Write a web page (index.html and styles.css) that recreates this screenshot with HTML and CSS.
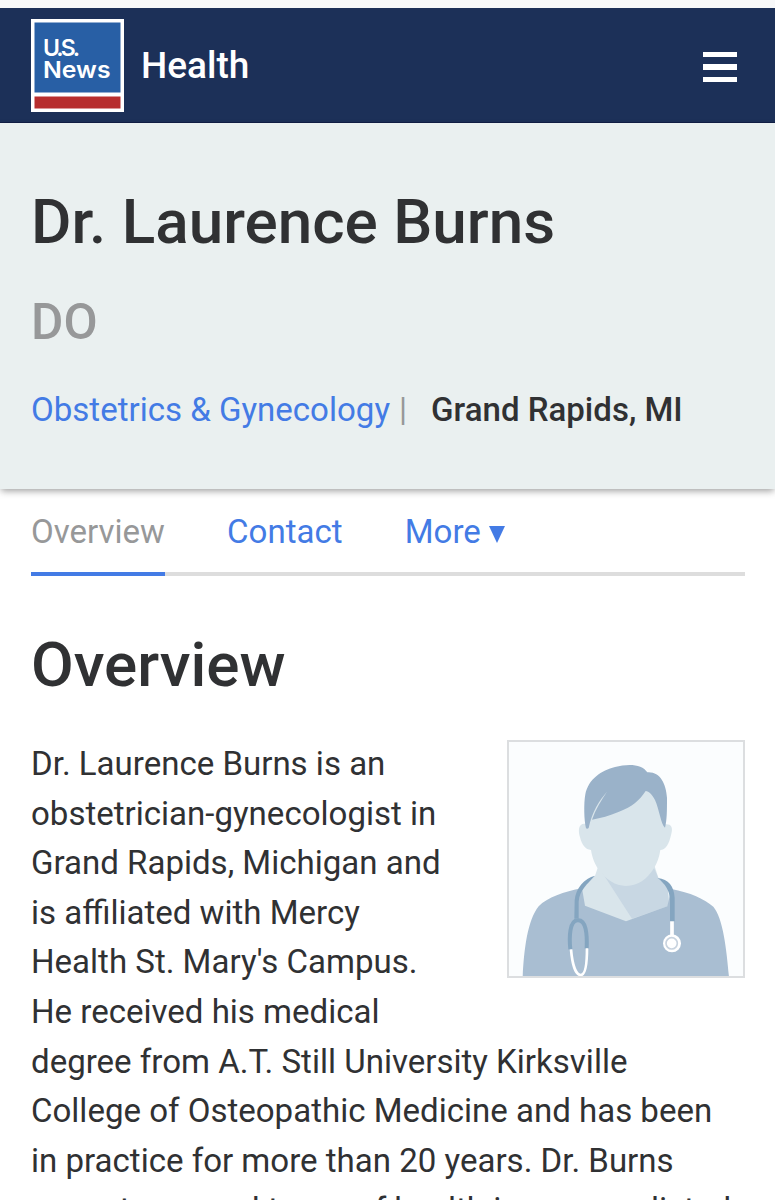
FILE: index.html
```
<!DOCTYPE html>
<html lang="en">
<head>
  <meta charset="UTF-8">
  <meta name="viewport" content="width=device-width, initial-scale=1.0">
  <title>Dr. Laurence Burns - U.S. News Health</title>
  <link rel="stylesheet" href="styles.css">
</head>
<body>
  <header class="navbar">
    <a class="brand" href="#">
      <svg class="logo" viewBox="0 0 93 93" aria-label="U.S. News">
        <rect width="93" height="93" fill="#fff"/>
        <rect x="3.5" y="3.5" width="86" height="70" fill="#285fa5"/>
        <rect x="3.5" y="77.5" width="86" height="12" fill="#b72d2e"/>
        <text x="12" y="36.8" textLength="37">U.S.</text>
        <text x="12" y="58.5" textLength="67.5" lengthAdjust="spacingAndGlyphs">News</text>
      </svg>
      <span>Health</span>
    </a>
    <button class="menu" aria-label="Menu"><i></i><i></i><i></i></button>
  </header>

  <section class="hero">
    <h1>Dr. Laurence Burns</h1>
    <p class="degree">DO</p>
    <p class="specialty"><a href="#">Obstetrics &amp; Gynecology</a><span class="divider">|</span><strong>Grand Rapids, MI</strong></p>
  </section>

  <main>
    <nav class="tabs">
      <a class="active" href="#">Overview</a>
      <a href="#">Contact</a>
      <a href="#">More <svg class="caret" viewBox="0 0 16 17"><path d="M0 0h16L8 17z"/></svg></a>
    </nav>

    <h2>Overview</h2>
    <div class="bio">
      <svg class="photo" viewBox="27 35 702 702">
        <!-- neck -->
        <path fill="#d9e5eb" d="M294 410L285 436L244 478L250 535L378 580L510 530L502 465L476 445L463 405z"/>
        <path fill="#c8d7e3" d="M298 413Q330 462 378 466Q430 462 461 410L476 445L503 468L507 526L396 565z"/>
        <!-- scrubs -->
        <path fill="#a9bed2" d="M68 740C72 660 82 570 116 528C142 502 192 484 246 474L255 526L378 573L502 528L514 476C570 486 614 507 640 529C670 565 680 660 687 740z"/>
        <!-- face and ears -->
        <path fill="#d9e5eb" d="M260 281C236 275 233 298 240 321C246 344 256 358 273 359C277 385 286 404 295 416C320 450 345 466 378 466C416 466 442 444 461 415C472 398 478 380 481 359C496 358 507 343 514 310C520 289 512 279 494 282L480 160H300z"/>
        <!-- hair -->
        <path fill="#9ab2c9" d="M258 294C252 270 251 220 256 192C265 146 305 120 345 110C385 99 427 101 442 126C479 123 498 158 501 202C501 240 501 269 495 292C483 283 478 238 465 209C456 191 447 184 437 182C419 210 397 229 357 244C327 256 304 263 276 268C287 236 304 210 321 184C298 210 276 244 266 293Q262 297 258 294z"/>
        <!-- stethoscope -->
        <g fill="none" stroke-linecap="butt">
          <path fill="#84a5c0" stroke="none" d="M285 436C253 444 227 473 224 510L223 565H236V514C239 478 262 462 285 436z"/>
          <path stroke="#84a5c0" stroke-width="12" d="M211 657C207 618 209 571 233 570C258 568 262 610 260 655"/>
          <path fill="#84a5c0" stroke="none" d="M473 443C506 447 522 468 524 502V573H510V510C509 479 496 462 473 443z"/>
          <path stroke="#fff" stroke-width="8" d="M213 657C217 704 228 735 243 734C256 733 261 700 261 654"/>
          <path stroke="#fff" stroke-width="11" d="M516 573V620"/>
        </g>
        <circle cx="516" cy="639" r="27" fill="#fff"/>
        <circle cx="515" cy="639" r="17" fill="#fff" stroke="#c8d3df" stroke-width="5"/>
      </svg>
      <p>Dr. Laurence Burns is an obstetrician-gynecologist in Grand Rapids, Michigan and is affiliated with Mercy Health St. Mary's Campus. He received his medical degree from A.T. Still University Kirksville College of Osteopathic Medicine and has been in practice for more than 20 years. Dr. Burns accepts several types of health insurance, listed</p>
    </div>
  </main>
</body>
</html>
```
FILE: styles.css
```
* {
  margin: 0;
  padding: 0;
  box-sizing: border-box;
}

html {
  height: 100%;
  overflow: hidden;
}

body {
  height: 1200px;
  overflow: hidden;
  border-top: 8px solid #f7f8f9;
  background: #fff;
  color: #303133;
  font-family: Roboto, sans-serif;
  font-size: 33.04px;
  line-height: 49.6px;
}

a {
  color: #437be5;
  text-decoration: none;
}

.navbar {
  height: 115px;
  padding: 0 38px 0 31px;
  background: #1c3058;
  border-bottom: 1px solid #111f46;
  display: flex;
  justify-content: space-between;
  align-items: center;
}

.brand {
  display: flex;
  align-items: center;
  gap: 17px;
  color: #fff;
  font-size: 37px;
  font-weight: 500;
}

.brand span {
  padding-top: 2px;
}

.logo {
  width: 93px;
  height: 93px;
}

.logo text {
  fill: #fff;
  font: 600 23px Inter, sans-serif;
}

.menu {
  display: flex;
  flex-direction: column;
  gap: 7px;
  margin-top: 4px;
  border: 0;
  background: none;
}

.menu i {
  width: 34px;
  height: 5.5px;
  background: #fff;
}

.hero {
  height: 366px;
  padding: 61px 31px 0;
  background: #eaf0f0;
  box-shadow: 0 3px 7px -1px rgba(0, 0, 0, 0.38);
}

h1,
h2 {
  font-size: 62px;
  font-weight: 500;
  line-height: 76px;
}

.degree {
  margin-top: 38px;
  color: #979899;
  font-size: 49.6px;
  font-weight: 500;
}

.specialty {
  margin-top: 37px;
}

.specialty strong {
  font-weight: 500;
}

.divider {
  margin: 0 24px 0 9px;
  color: #979899;
}

main {
  padding: 0 30px 0 31px;
}

.tabs {
  height: 87px;
  display: flex;
  gap: 62.2px;
  padding-top: 18px;
  border-bottom: 4px solid #ddd;
}

.tabs a {
  height: 69px;
}

.tabs .active {
  color: #979899;
  border-bottom: 4px solid #437be5;
}

.caret {
  width: 16px;
  height: 17px;
  fill: #437be5;
}

h2 {
  margin: 51px 0 36px;
}

.photo {
  float: right;
  width: 238px;
  height: 238px;
  margin: 1px 0 31px 50px;
  border: 2px solid #dcdee0;
  background: #fbfdfe;
}
```
